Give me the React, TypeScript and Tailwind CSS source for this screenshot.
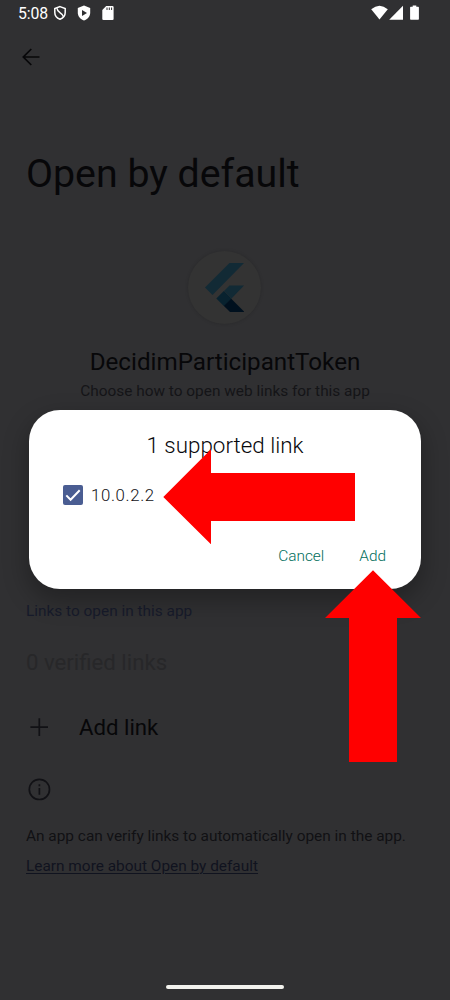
import React from "react";

function StatusBar() {
  return (
    <div className="flex h-[26px] items-center text-white">
      <span className="ml-[18px] w-[36px] pt-px text-[15.8px] leading-[26px] tracking-[-0.1px]">5:08</span>
      <svg className="-ml-px h-[16px] w-[14px]" viewBox="0 0 14 16" fill="none" stroke="white" strokeWidth="1.5">
        <path d="M7 1.6 12.2 3.5V7.6C12.2 10.7 10 13.2 7 14.3 4 13.2 1.8 10.7 1.8 7.6V3.5Z" />
        <path d="M4 3.2C4.2 8.2 9.6 7.4 10.6 12" strokeWidth="1.5" />
      </svg>
      <svg className="ml-[10px] h-[16px] w-[14px]" viewBox="0 0 14 16">
        <path fill="white" d="M7 .6 13.2 2.9V7.5C13.2 11.3 10.6 14.3 7 15.4 3.4 14.3.8 11.3.8 7.5V2.9Z" />
        <path fill="#303032" d="M5 5.1 10 8 5 10.9Z" />
      </svg>
      <svg className="ml-[11px] h-[16px] w-[12px]" viewBox="0 0 12 16">
        <path fill="white" d="M4.2 1H10.5Q11.6 1 11.6 2.1V14Q11.6 15.1 10.5 15.1H1.5Q.3 15.1.3 14V5Z" />
        <path stroke="#303032" strokeWidth="1" d="M5 2.5V5M7.3 2.5V5M9.6 2.5V5" />
      </svg>
      <svg className="ml-auto h-[16px] w-[17px]" viewBox="0 0 17 16">
        <path fill="white" d="M.2 4.3Q8.5-2.7 16.8 4.3L8.5 14.6Z" />
      </svg>
      <svg className="ml-[1px] h-[16px] w-[14px]" viewBox="0 0 14 16">
        <path fill="white" d="M14 .8V14.7H.2Z" />
      </svg>
      <svg className="ml-[7px] mr-[31px] h-[16px] w-[9px]" viewBox="0 0 9 16">
        <path fill="white" d="M2.7.5H6.3V1.8H8.2Q8.9 1.8 8.9 2.5V14Q8.9 14.8 8.2 14.8H.8Q.1 14.8.1 14V2.5Q.1 1.8.8 1.8H2.7Z" />
      </svg>
    </div>
  );
}

function FlutterBadge() {
  return (
    <div className="ml-[188px] mt-[47px] flex h-[73px] w-[73px] items-center justify-center rounded-full bg-[#333333] shadow-[0_0_3px_1px_rgba(0,0,0,0.09)]">
      <svg className="h-[73px] w-[73px]" viewBox="188 251 73 73">
        <path fill="#122a35" d="M229.5 263H244L212.5 295 205 287.5Z" />
        <path fill="#122a35" d="M229.5 285.5H244L231.5 298.5 224 291Z" />
        <path fill="#00101e" d="M223.7 305.7 231 298.5 244 311.5V312H230Z" />
        <path fill="#08222f" d="M216.3 298.5 223.8 291 231.3 298.5 223.8 306Z" />
      </svg>
    </div>
  );
}

function LinkDialog() {
  return (
    <div className="absolute left-[29px] top-[410px] flex h-[179px] w-[392px] flex-col rounded-[31px] bg-white shadow-[0_10px_24px_2px_rgba(0,0,0,0.28)]">
      <h2 className="mt-[19px] text-center text-[22.4px] font-light leading-[32px] text-[#08080c]">1 supported link</h2>
      <label className="ml-[34px] mt-[23px] flex h-[22px] items-center">
        <svg className="h-[20px] w-[20px]" viewBox="0 0 20 20">
          <rect width="20" height="20" rx="2" fill="#4a5d92" />
          <path d="M3.3 10.4 7.6 14.7 16.7 5.2" fill="none" stroke="white" strokeWidth="2" />
        </svg>
        <span className="ml-[8px] text-[16.8px] font-light leading-[22px] tracking-[0.65px] text-[#111116]">10.0.2.2</span>
      </label>
      <div className="mr-[35px] mt-[38px] flex justify-end gap-[35px] text-[15.4px] font-light leading-[24px] text-[#006e5b]">
        <button>Cancel</button>
        <button>Add</button>
      </div>
    </div>
  );
}

export default function App() {
  return (
    <div className="relative flex h-[1000px] w-[450px] flex-col overflow-hidden whitespace-nowrap bg-[#303032] font-['Roboto',sans-serif] text-[#070709]">
      <StatusBar />
      <svg className="ml-[21px] mt-[21px] h-[20px] w-[20px]" viewBox="0 0 20 20" fill="none" stroke="#070709" strokeWidth="1.7">
        <path d="M18.5 10H2.3M10.3 2 2.3 10 10.3 18" />
      </svg>
      <h1 className="ml-[26px] mt-[77px] text-[39.3px] leading-[60px]">Open by default</h1>
      <FlutterBadge />
      <div className="mt-[22px] text-center text-[24.2px] leading-[32px]">DecidimParticipantToken</div>
      <div className="text-center text-[15.4px] leading-[26px] text-[#151518]">Choose how to open web links for this app</div>

      <div className="ml-[26px] mt-[195px] text-[15.4px] leading-[24px] text-[#171b2b]">Links to open in this app</div>
      <div className="ml-[26px] mt-[22px] text-[22.2px] leading-[34px] text-[#272729]">0 verified links</div>
      <div className="ml-[30px] mt-[31px] flex h-[34px] items-center">
        <svg className="h-[18px] w-[18px]" viewBox="0 0 18 18" stroke="#111115" strokeWidth="1.7">
          <path d="M9.3.2V18M.4 9.1H18" />
        </svg>
        <span className="ml-[31px] text-[22.2px] leading-[34px]">Add link</span>
      </div>
      <svg className="ml-[28px] mt-[34px] h-[23px] w-[23px]" viewBox="0 0 23 23" fill="none" stroke="#111115" strokeWidth="1.7">
        <circle cx="11.4" cy="11.4" r="10.1" />
        <path d="M11.4 10V16.8M11.4 6.2V8.2" />
      </svg>
      <p className="ml-[26px] mt-[23px] text-[15.4px] leading-[24px] text-[#111114]">An app can verify links to automatically open in the app.</p>
      <a className="ml-[26px] mt-[6px] self-start text-[15.4px] leading-[24px] text-[#10131f] underline decoration-1 underline-offset-2">Learn more about Open by default</a>
      <div className="mx-auto mt-[107px] h-[4px] w-[118px] rounded-full bg-[#f2f2ee]" />

      <LinkDialog />
      <svg className="absolute left-[163px] top-[449px] h-[95px] w-[192px]" viewBox="0 0 192 95">
        <path fill="#ff0000" d="M.3 48 48 .3V24H192V72H48V95.3Z" />
      </svg>
      <svg className="absolute left-[325px] top-[570px] h-[192px] w-[96px]" viewBox="0 0 96 192">
        <path fill="#ff0000" d="M48 .3 96 48H72V192H24V48H0Z" />
      </svg>
    </div>
  );
}
